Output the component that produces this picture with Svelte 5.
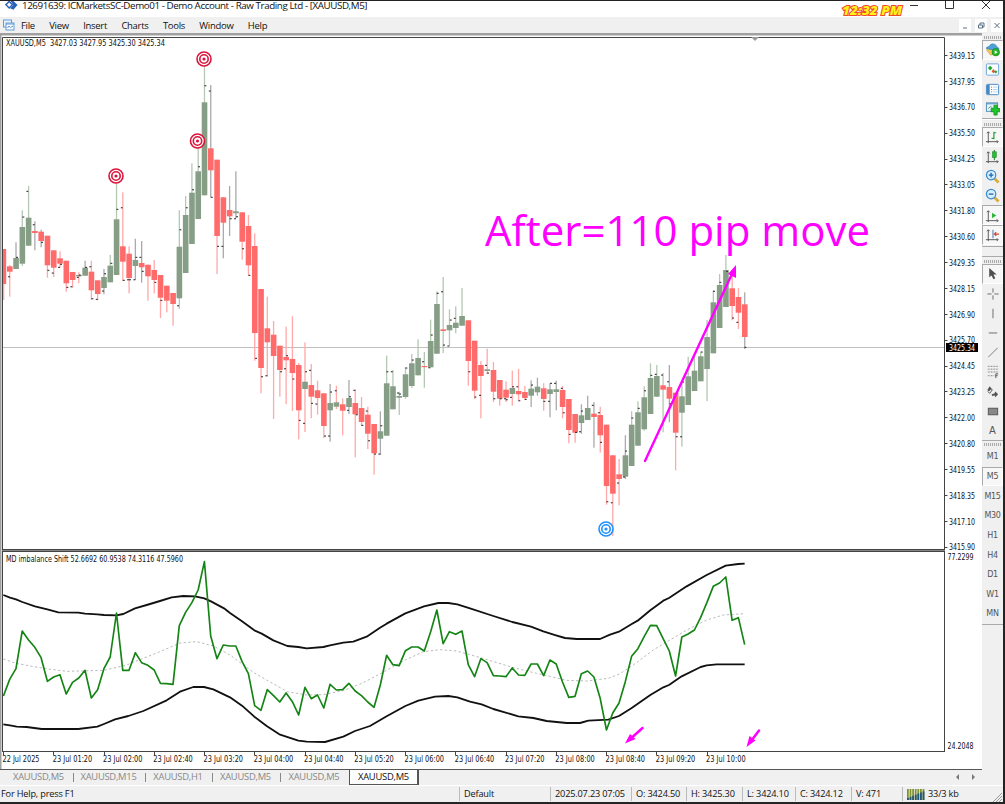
<script lang="ts">
  type Candle = [number, number, number, number, string, string];

  const STEP = 6.282;
  const FIRST_X = 3.4;

  // high, body top, body bottom, low, body kind, wick kind (u = up, d = down, n = neutral)
  const candles: Candle[] = [
    [249, 249, 284, 300, "d", "d"], [265, 266.3, 271.7, 296.7, "d", "d"],
    [242.3, 258, 269, 269, "u", "n"], [210.3, 227, 263.7, 266, "u", "u"],
    [186, 217.7, 245.7, 245.7, "u", "u"], [221.3, 231, 233, 250.3, "d", "n"],
    [229.7, 231.7, 241, 247.3, "d", "n"], [235.7, 235.7, 265.3, 277.7, "d", "d"],
    [250.3, 250.3, 267.7, 277, "d", "d"], [251.3, 258.3, 263.7, 267.7, "d", "d"],
    [260.7, 260.7, 283.3, 291.7, "d", "d"], [272, 272, 280, 287.7, "d", "d"],
    [272.3, 275, 276.3, 283.3, "u", "d"], [260.7, 267.7, 275.7, 275.7, "u", "n"],
    [260.7, 271.7, 290.3, 299.7, "d", "d"], [280.3, 280.3, 294, 300.3, "d", "d"],
    [269, 277, 288, 294.3, "u", "n"], [255, 265.7, 282.3, 282.3, "u", "u"],
    [183, 219.3, 275, 275, "u", "u"], [192.3, 246.3, 261.7, 281, "d", "d"],
    [246.3, 253.7, 278, 293.3, "d", "d"], [238.7, 260, 266, 280, "u", "n"],
    [241, 263, 267.3, 282.7, "d", "n"], [264.7, 264.7, 276.3, 300.7, "d", "d"],
    [260, 270, 280, 293.3, "d", "d"], [275, 275, 297.7, 318, "d", "d"],
    [285.7, 285.7, 300.7, 312.3, "d", "d"], [293, 293, 304, 325.7, "d", "d"],
    [210.3, 246.7, 298.3, 309, "u", "u"], [196, 215, 273, 273, "u", "u"],
    [163.3, 192.7, 244, 244, "u", "u"], [148, 171.3, 219, 219, "u", "u"],
    [66, 102.3, 195.3, 195.3, "u", "u"], [85, 148.3, 170.3, 197.3, "d", "n"],
    [159.7, 159.7, 236, 274, "d", "d"], [197.3, 197.3, 222.7, 258.3, "d", "n"],
    [186, 210, 216.3, 236, "d", "n"], [171.3, 211.3, 213.3, 218, "u", "n"],
    [212.3, 212.3, 241.7, 259.7, "d", "d"], [215, 226, 265.3, 275.3, "d", "d"],
    [233.3, 246, 333, 360.7, "d", "d"], [289, 289, 368, 393.3, "d", "d"],
    [296.7, 328.3, 342.3, 376.7, "d", "d"], [321, 334.7, 356, 419, "d", "d"],
    [345.7, 345.7, 370, 396.7, "d", "d"], [326.7, 357, 360.3, 404.3, "d", "d"],
    [316.3, 359, 373, 411, "d", "d"], [363, 365, 410.3, 439.3, "d", "d"],
    [342.3, 381.7, 389, 432, "u", "d"], [364, 385, 396.7, 418.3, "d", "d"],
    [380.7, 390.3, 398, 414.7, "d", "d"], [393.3, 393.3, 426, 438, "d", "d"],
    [384, 403, 410.3, 441.7, "u", "n"], [385.7, 402.3, 406.7, 409, "u", "d"],
    [398.3, 404.3, 410.7, 435.3, "d", "d"], [380, 398, 407, 414, "u", "n"],
    [389.3, 403, 414.3, 457.3, "d", "d"], [397, 408, 422, 426, "d", "d"],
    [406.7, 414.7, 433.7, 449, "d", "d"], [424, 424, 453.3, 474.7, "d", "d"],
    [411.3, 431.3, 438.7, 455, "u", "n"], [355.7, 383.3, 435.7, 435.7, "u", "u"],
    [370, 386.3, 409.3, 409.3, "u", "u"], [391.7, 396, 397.7, 415, "u", "u"],
    [367.3, 374.3, 397, 398.7, "u", "u"], [354, 363.3, 386, 388, "u", "u"],
    [339.3, 358, 375.3, 375.3, "u", "u"], [352, 366, 367.2, 387.7, "d", "u"],
    [319.7, 341, 367.3, 367.3, "u", "u"], [291.3, 304, 353.7, 353.7, "u", "u"],
    [277, 329.3, 331, 353, "d", "u"], [309.3, 325, 330.3, 346, "u", "u"],
    [306.3, 322.7, 328, 333.3, "u", "u"], [288, 316, 325.7, 325.7, "u", "u"],
    [320.3, 320.3, 361, 385.7, "d", "d"], [340.7, 340.7, 390.7, 399, "d", "d"],
    [361, 365, 376, 418.3, "d", "d"], [348.7, 369.3, 371, 374, "u", "d"],
    [362, 370, 391.7, 402, "d", "d"], [380, 380, 398.7, 405.7, "d", "d"],
    [381.3, 389.7, 397.7, 402, "d", "d"], [370.7, 388, 394, 405.7, "u", "d"],
    [369, 391, 394.3, 400.7, "d", "d"], [385.7, 392, 398, 400, "d", "d"],
    [380.3, 388.7, 395.7, 407, "u", "n"], [377.7, 386.7, 392.3, 395.7, "u", "n"],
    [383.3, 388.3, 399, 410.7, "d", "d"], [383.3, 389.3, 394, 417.3, "u", "n"],
    [380.7, 389.3, 392, 410.3, "u", "n"], [386, 390, 407, 418.3, "d", "d"],
    [399, 399, 430, 443.3, "d", "d"], [414, 414, 432.7, 442.7, "d", "d"],
    [404.3, 415.3, 423, 433.7, "u", "n"], [395.7, 408, 420, 420, "u", "n"],
    [402, 413.7, 417, 447.7, "d", "n"], [406.7, 415, 435.3, 452.7, "d", "d"],
    [424.7, 424.7, 486, 504.7, "d", "d"], [455.3, 455.3, 493.7, 536, "d", "d"],
    [459, 474.3, 479, 505.3, "d", "d"], [435.3, 455.3, 476.7, 479, "u", "n"],
    [411.3, 424.7, 466, 466, "u", "u"], [401.3, 412.3, 445.7, 445.7, "u", "u"],
    [386.3, 397.3, 429.3, 430.7, "u", "u"], [363.3, 378, 414, 414, "u", "u"],
    [365, 376, 396.7, 396.7, "u", "u"], [373, 385.3, 389.7, 432.3, "d", "u"],
    [365, 387, 398.7, 422.3, "d", "n"], [392.7, 392.7, 432.7, 470.3, "d", "d"],
    [381.7, 396.3, 412.7, 446.7, "u", "u"], [356.7, 376.3, 405, 405, "u", "u"],
    [357, 370.7, 391, 391, "u", "u"], [351.7, 356.3, 381.3, 381.3, "u", "u"],
    [320, 337, 369, 401, "u", "u"], [290.3, 302.3, 353.3, 353.3, "u", "u"],
    [274, 285, 328, 328, "u", "u"], [255, 270, 307, 307, "u", "u"],
    [270, 288.3, 306, 320.3, "d", "d"], [288, 297, 312.7, 329, "d", "d"],
    [292.3, 304.3, 337, 349, "d", "n"],
  ];

  // open / close marks
  const marks: [number, number][] = [
    [9, 276.7], [17, 257.3], [23.3, 217], [27.3, 191.3], [33.7, 224.7], [42, 242.3],
    [48.3, 270.3], [52.7, 273], [59, 267.3], [61, 264.3], [67.3, 287.3], [71.3, 286.7],
    [77.7, 277.3], [79.7, 275], [86, 267.3], [90.3, 266.7], [92.3, 298.7], [96.7, 299.3],
    [103, 291], [105, 273.7], [111.3, 263.3], [117.3, 209.3], [121.7, 207.7], [123.7, 280.3],
    [128, 279.7], [130, 279.7], [134.3, 279.7], [136.3, 257.3], [140.3, 257.3], [142.7, 271.3],
    [155.3, 282.3], [161.3, 300.3], [178, 305.7], [180.3, 229.7], [186.7, 207.7], [193, 189.7],
    [199, 166.7], [205.3, 85.7], [209.7, 91], [211.7, 197.3], [218, 246.3], [222.3, 246.3],
    [230.7, 218.7], [235, 218.7], [237, 216.7], [243, 248.7], [249.3, 275.3], [256, 358.3],
    [262, 376.7], [266.3, 375.7], [281, 371.7], [285, 368.7], [287, 355.7], [293.3, 379],
    [299.7, 420.3], [304, 423.3], [306, 371.7], [310, 370.3], [312, 403.3], [316.3, 404],
    [325, 436], [329, 436], [331, 392], [335.7, 390.7], [348, 410.3], [350, 396.7],
    [354.3, 390.3], [356.7, 414.7], [362.3, 425.3], [366.7, 411], [369, 440.7], [375, 454],
    [379.3, 454], [381.3, 425.7], [387.3, 371.7], [391.7, 371.7], [398, 393], [400, 394],
    [406.3, 368], [412.7, 360], [423, 361.7], [429.3, 367.7], [431.7, 335], [437.7, 293.3],
    [442, 291.7], [444, 345], [448.3, 346], [450.7, 320], [454.7, 318.3], [469.3, 371.7],
    [475.3, 397], [480, 395.3], [486, 365.3], [488, 373], [494.3, 398.7], [500.7, 398.7],
    [505, 398.7], [506.7, 399.7], [511, 397.3], [513, 386.7], [517.3, 386.7], [519.3, 400.7],
    [525.7, 399.3], [532, 385], [544.3, 401.3], [549, 401.3], [551, 383.3], [555, 383.3],
    [561.7, 388.3], [563.7, 412.7], [569.7, 434.3], [576, 432.3], [580, 431.7], [582, 411],
    [592.7, 405.3], [599, 412.7], [601, 442.3], [607.3, 501.7], [611.7, 502.7], [618, 483],
    [624, 477], [626, 451], [632.3, 418], [638.7, 408.3], [645, 390.7], [651.3, 375.3],
    [655.7, 374.3], [662, 375], [668, 381.7], [670.3, 403.7], [676.7, 436.7], [681, 436.7],
    [683, 382], [701.7, 352], [714, 291.3], [720.3, 282.3], [727, 271.3], [733, 318],
    [737.3, 322.3], [745.3, 347.3],
  ];

  // one value per candle, in thirds of a pixel below the top of the pane
  const imbalance = [
    453, 403, 371, 258, 285, 307, 338, 409, 396, 389, 447, 412, 399, 376, 459, 434, 371, 336, 204, 376,
    376, 323, 353, 361, 375, 415, 416, 418, 242, 202, 173, 135, 50, 273, 341, 300, 303, 303, 350, 386,
    482, 496, 434, 452, 471, 444, 470, 510, 427, 461, 450, 489, 418, 435, 434, 415, 438, 452, 471, 487,
    420, 331, 359, 362, 317, 306, 306, 318, 261, 195, 296, 260, 268, 258, 359, 395, 341, 353, 392, 393,
    395, 369, 390, 391, 357, 357, 392, 345, 357, 411, 457, 454, 386, 378, 396, 460, 555, 504, 474, 410,
    334, 311, 275, 241, 242, 280, 318, 393, 276, 267, 255, 217, 172, 124, 114, 96, 226, 218, 299,
  ];
  const imbalancePoints = imbalance.map((v, i) => `${(FIRST_X + i * STEP) * 3},${v}`).join(" ");

  const upperBand =
    "10,150 30,158 48,163 67,171 105,184 142,193 175,202 235,203 255,206 292,208 312,210 349,211 370,207 405,190 440,180 480,168 515,157 550,153 585,154 613,160 633,169 672,190 690,204 726,229 763,256 785,266 820,286 862,303 895,306 920,310 970,306 990,301 1030,293 1060,290 1100,275 1140,248 1160,236 1216,205 1272,184 1315,174 1345,174 1372,178 1410,190 1480,213 1537,231 1593,245 1630,259 1668,271 1695,279 1730,282 1800,282 1830,269 1857,260 1894,238 1913,227 1951,196 1990,167 2007,159 2060,124 2120,90 2177,62 2215,57 2234,56";
  const lowerBand =
    "10,538 30,541 50,545 80,546 125,552 235,552 292,545 312,537 345,523 385,513 430,498 500,466 540,440 580,426 612,426 640,433 690,457 726,482 763,515 800,543 838,568 895,587 920,590 975,591 1030,575 1065,558 1110,543 1160,514 1216,483 1255,467 1305,455 1345,453 1372,457 1410,470 1445,478 1480,492 1555,514 1600,519 1640,528 1700,534 1740,534 1765,527 1825,524 1857,513 1894,490 1951,450 1990,427 2007,420 2045,394 2102,366 2120,361 2150,358 2234,358";
  const middleBand =
    "10,342 48,355 130,370 200,379 312,376 380,360 405,350 480,320 540,294 590,290 640,303 690,330 760,382 800,405 862,440 920,450 970,449 1030,437 1090,413 1160,376 1216,345 1270,320 1320,314 1370,318 1442,338 1537,367 1610,385 1700,406 1760,408 1825,400 1860,386 1900,360 1960,315 2010,285 2060,255 2120,225 2170,210 2234,206";

  const prices = [
    "3439.15", "3437.95", "3436.70", "3435.50", "3434.25", "3433.05", "3431.80", "3430.60", "3429.35", "3428.15",
    "3426.90", "3425.70", "3424.45", "3423.25", "3422.00", "3420.80", "3419.55", "3418.35", "3417.10", "3415.90",
  ];
  const times = [
    "22 Jul 2025", "23 Jul 01:20", "23 Jul 02:00", "23 Jul 02:40", "23 Jul 03:20", "23 Jul 04:00", "23 Jul 04:40",
    "23 Jul 05:20", "23 Jul 06:00", "23 Jul 06:40", "23 Jul 07:20", "23 Jul 08:00", "23 Jul 08:40", "23 Jul 09:20", "23 Jul 10:00",
  ];
  const targets: [number, number, string][] = [
    [204, 59, "#dc143c"], [197.5, 141, "#dc143c"], [116, 176, "#dc143c"], [606, 529, "#1e90ff"],
  ];

  const menu = ["File", "View", "Insert", "Charts", "Tools", "Window", "Help"];
  const tabs = ["XAUUSD,M5", "XAUUSD,M15", "XAUUSD,H1", "XAUUSD,M5", "XAUUSD,M5", "XAUUSD,M5"];
  const tabWidths = [73, 72, 67, 68, 69, 70];
  const periods = ["M1", "M5", "M15", "M30", "H1", "H4", "D1", "W1", "MN"];
  const chartTools = ["bars", "candle", "zoomin", "zoomout", "scroll", "shift"];
  const lineTools = ["cursor", "cross", "vline", "hline", "trend", "fibo", "arrows", "rect", "text"];
</script>

{#snippet icon(name: string)}
  <svg class="icon" viewBox="0 0 16 16">
    {#if name === "neworder"}
      <path d="M2 6.500 7.500 3 13 6l-4 7-3 1-4-5z" fill="#efc75e" stroke="#c49a37" stroke-width=".6" />
      <path d="M1 6.500Q3 5 4.500 4.500 6 1.500 9 2q3 .5 3.500 3 2 1 2.500 2.500Q8 10 1 6.500z" fill="#4da0d8" stroke="#287bb5" stroke-width=".6" />
      <circle cx="11.500" cy="10.800" r="4" fill="#24b528" stroke="#0b8211" stroke-width=".6" />
      <path d="M10.300 8.700v4.200l3.200-2.100z" fill="#fff" />
    {:else if name === "market"}
      <rect x="1.500" y="2" width="13" height="12" rx="1" fill="#fff" stroke="#6aa5dc" />
      <path d="M3 6.500 5.500 4 8 6.500 5.500 9z" fill="#25a934" /><path d="M7 10 9 7.500 11 10 9 12z" fill="#e2542d" />
      <path d="M10 10.500h3M11.500 9v3" stroke="#25a934" stroke-width="1.500" />
    {:else if name === "window"}
      <rect x="1.500" y="2.500" width="13" height="11" rx="1" fill="#fff" stroke="#4586c5" />
      <path d="M3.500 3v10" stroke="#4586c5" stroke-width="3" /><path d="M6.500 5.500h1M6.500 8h1M6.500 10.500h1" stroke="#d04040" />
      <path d="M8.500 5.500h5M8.500 8h5M8.500 10.500h5" stroke="#b9d5ec" />
    {:else if name === "newchart"}
      <rect x="1.500" y="2" width="12" height="9" fill="#e6f2fb" stroke="#4e8bbb" />
      <path d="M2 3h11" stroke="#4e8bbb" /><path d="M3.500 8 6 6l2 1" fill="none" stroke="#589f6c" />
      <path d="M9.500 4.500h3.500v3.500h3v3.500h-3V15H9.500v-3.500h-3V8h3z" fill="#20c52c" stroke="#078413" stroke-width=".7" />
    {:else if name === "bars" || name === "candle" || name === "scroll" || name === "shift"}
      <path d="M3.500 3v12M1 13.500h13M2 4.500 3.500 3 5 4.500M12.500 12l1.500 1.500-1.500 1.500" fill="none" stroke="#555" />
      {#if name === "bars"}
        <path d="M9.500 3v8M9.500 4H12M7 10h2.500" stroke="#24a337" stroke-width="1.300" />
      {:else if name === "candle"}
        <path d="M10 1v11" stroke="#187d20" /><rect x="8" y="3" width="4" height="6" fill="#21c337" stroke="#187d20" stroke-width=".6" />
      {:else if name === "scroll"}
        <path d="M7.500 5v6l4.500-3z" fill="#28b23a" />
      {:else}
        <path d="M8.500 3v9" stroke="#386fac" /><path d="M10 7.500h5M12 5.500l-2 2 2 2" fill="none" stroke="#c64b2f" stroke-width="1.300" />
      {/if}
    {:else if name === "zoomin" || name === "zoomout"}
      <path d="m9.500 9.500 5 5" stroke="#d9ad37" stroke-width="3" /><circle cx="6.500" cy="6.500" r="5" fill="#d8efff" stroke="#398bd0" stroke-width="1.300" />
      <path d="M4 6.500h5" stroke="#286eb4" stroke-width="1.500" />
      {#if name === "zoomin"}<path d="M6.500 4v5" stroke="#286eb4" stroke-width="1.500" />{/if}
    {:else if name === "cursor"}
      <path d="M4.500 2v10l2.500-2 2 4 2-1-2-4h3.500z" fill="#505050" />
    {:else if name === "cross"}
      <path d="M8.500 2.500V7M8.500 10V14.500M2.500 8.500H7M10 8.500h4.500" stroke="#666" />
    {:else if name === "vline"}
      <path d="M8.500 3v10" stroke="#666" />
    {:else if name === "hline"}
      <path d="M4 8.500h9" stroke="#666" />
    {:else if name === "trend"}
      <path d="M3.500 13 13.500 3" stroke="#777" />
    {:else if name === "fibo"}
      <path d="M3 2.500h11M3 5.500h11M3 8.500h11M3 12.500h7" stroke="#777" stroke-dasharray="1 .7" /><path d="M11.500 15v-4.500H14M11.500 12.500h2" fill="none" stroke="#555" />
    {:else if name === "arrows"}
      <path d="M5 2.500 8 6H6L4 8 2.500 6.500zM11 8l3 3-3 3-1-2-2 1-1-2 3-1z" fill="#555" /><path d="m3 8 2 2 3-4" fill="none" stroke="#555" />
    {:else if name === "rect"}
      <rect x="3.500" y="4.500" width="10" height="7" fill="#888" stroke="#555" />
    {/if}
  </svg>
{/snippet}

<div class="window">
  <header class="titlebar">
    <svg class="logo" viewBox="0 0 14 14"><path d="M4.500 1.500 8 5 4.500 8.500 1 5z" fill="#fff" stroke="#2862b5" stroke-width="1.500" /><path d="M6 1h3l4.500 4.500L9 10.500 5.500 9 9 5.500z" fill="#2862b5" /></svg>
    <span class="title">12691639: ICMarketsSC-Demo01 - Demo Account - Raw Trading Ltd - [XAUUSD,M5]</span>
    <svg class="clock" viewBox="0 0 66 17"><text x="2" y="13.500" textLength="60" lengthAdjust="spacingAndGlyphs">12:32 PM</text></svg>
    <svg class="controls" viewBox="0 0 96 17"><path d="M4 4.500h8M39.500 0v7.500h8V0M76 0l8 8M84 0l-8 8" /></svg>
  </header>

  <nav class="menubar">
    <svg class="doc" viewBox="0 0 12 12"><rect x=".5" y="1" width="8" height="7" fill="#eaf4ff" stroke="#629bd5" /><rect x="3" y="4" width="8" height="7" fill="#f7fbff" stroke="#629bd5" /><path d="M3 5h8M4.500 9 6 7l1.500 1.500L10 7" fill="none" stroke="#629bd5" /></svg>
    {#each menu as label}
      <span>{label}</span>
    {/each}
    <div class="mdi">
      <svg viewBox="0 0 12 13"><path d="M4 9h4" /></svg>
      <svg viewBox="0 0 12 13"><path d="M3.500 6h4v3h-4zM5 6V4h4v4H7.500" fill="none" /></svg>
      <svg viewBox="0 0 12 13"><path d="m3.500 4 5 5M8.500 4l-5 5" /></svg>
    </div>
  </nav>

  <main>
    <section class="workspace">
      <svg class="chart" viewBox="0 33 982 736">
        <rect x="0" y="33" width="982" height="2.500" fill="#a0a0a0" />
        <rect x="0" y="33" width="1.500" height="736" fill="#a0a0a0" />
        <path d="M2.500 752V37.500H944.500V751.500" class="frame" />
        <rect x="2" y="549" width="943" height="2.500" fill="#858585" />
        <path d="M2 549.500H945M2 551.500H945M2 751.500H945" class="frame" />
        <path d="M751 37h8l-4 4z" fill="#999" />
        <path d="M3 347.500H944" stroke="#c0c0c0" />

        <g>
          {#each candles as [high, top, bottom, low, body, wick], i}
            <rect class="wick-{wick}" x={Math.max(3, FIRST_X + i * STEP - 0.6)} y={high} width="1.3" height={low - high} />
            <rect class={body} x={Math.max(3, FIRST_X + i * STEP - 2.7)} y={top} width={i === 0 ? 3.2 : 5.6} height={bottom - top} />
          {/each}
          {#each marks as [x, y]}
            <rect x={x - 0.9} y={y - 0.5} width="1.9" height="1.1" fill="#333" />
          {/each}
        </g>

        {#each targets as [x, y, color]}
          <g fill="none" stroke={color} stroke-width="1.600">
            <circle cx={x} cy={y} r="7" fill="#fff" /><circle cx={x} cy={y} r="4.200" />
            <circle cx={x} cy={y} r="1.600" fill={color} stroke="none" />
          </g>
        {/each}

        <text class="small" x="6" y="46" textLength="159" lengthAdjust="spacingAndGlyphs" xml:space="preserve">XAUUSD,M5  3427.03 3427.95 3425.30 3425.34</text>
        <text class="note" x="485" y="246" textLength="385" lengthAdjust="spacingAndGlyphs">After=110 pip move</text>
        <path d="M645 461 731.500 275" stroke="#f0f" stroke-width="2.400" stroke-linecap="round" />
        <path d="m736 265-8 9 8 4z" fill="#f0f" />

        {#each prices as price, i}
          <path d="M945 {Math.round(55 + i * 25.88) + 0.5}h2.500" class="frame" />
          <text class="small" x="949" y={58.7 + i * 25.88} textLength="26" lengthAdjust="spacingAndGlyphs">{price}</text>
        {/each}
        <rect x="946" y="343" width="32" height="9" fill="#000" />
        <text class="small current" x="949" y="350.500" textLength="26" lengthAdjust="spacingAndGlyphs">3425.34</text>

        <g transform="translate(0 545) scale(.33333)" fill="none" stroke-linejoin="round">
          <polyline points={middleBand} stroke="#b9b9b9" stroke-width="3" stroke-dasharray="7 7" />
          <polyline points={upperBand} stroke="#111" stroke-width="5.500" />
          <polyline points={lowerBand} stroke="#111" stroke-width="5.500" />
          <polyline points={imbalancePoints} stroke="#148414" stroke-width="5" />
        </g>
        <g stroke="#f0f" fill="#f0f">
          <path d="m642.500 728-10 9M759 730.500l-6 8" stroke-width="2.500" stroke-linecap="round" />
          <path d="m625 743.500 5-9.500 5.500 5zM746.500 747l3-11 6 4.500z" stroke="none" />
        </g>
        <text class="small" x="6" y="561.500" textLength="177" lengthAdjust="spacingAndGlyphs">MD imbalance Shift 52.6692 60.9538 74.3116 47.5960</text>
        <text class="small" x="947.500" y="560.300" textLength="26" lengthAdjust="spacingAndGlyphs">77.2299</text>
        <text class="small" x="947.500" y="749" textLength="26" lengthAdjust="spacingAndGlyphs">24.2048</text>

        {#each times as time, i}
          <path d="M{Math.round(3 + i * 50.256) + 0.5} 752v3" class="frame" />
          <text class="small" x={2.5 + i * 50.256} y="762" textLength={i ? 39.5 : 37} lengthAdjust="spacingAndGlyphs">{time}</text>
        {/each}
      </svg>

      <div class="tabs">
        {#each tabs as tab, i}
          <span class:active={i === 5} style="width: {tabWidths[i]}px">{tab}</span>
        {/each}
        <svg viewBox="0 0 24 8"><path d="M5 1v6L2 4zM18 1v6l3-3z" fill="#777" /></svg>
      </div>
    </section>

    <aside>
      <div class="group first">
        <i class="grip"></i>
        <span class="tool pressed">{@render icon("neworder")}</span>
        {#each ["market", "window", "newchart"] as name}
          <span class="tool">{@render icon(name)}</span>
        {/each}
      </div>
      <div class="group second">
        <i class="grip"></i>
        {#each chartTools as name}
          <span class="tool" class:pressed={name === "bars" || name === "scroll" || name === "shift"}>{@render icon(name)}</span>
        {/each}
      </div>
      <div class="group third">
        <i class="grip"></i>
        {#each lineTools as name}
          <span class="tool" class:pressed={name === "cursor"}>
            {#if name === "text"}A{:else}{@render icon(name)}{/if}
          </span>
        {/each}
      </div>
      <div class="group fourth">
        <i class="grip"></i>
        {#each periods as period}
          <span class="tool period" class:pressed={period === "M5"}>{period}</span>
        {/each}
      </div>
    </aside>
  </main>

  <footer>
    <span>For Help, press F1</span>
    <span>Default</span>
    <span>2025.07.23 07:05</span>
    <span>O: 3424.50</span>
    <span>H: 3425.30</span>
    <span>L: 3424.10</span>
    <span>C: 3424.12</span>
    <span>V: 471</span>
    <span class="traffic">
      <svg viewBox="0 0 18 11">
        {#each [0, 1, 2, 3, 4, 5, 6] as n}
          <rect x={n * 2.6} y="0" width="1.800" height="11" fill="#809331" />
          <rect x={n * 2.6} y={9 - n * 1.1} width="1.800" height={2 + n * 1.1} fill="#245675" />
        {/each}
      </svg>
      33/3 kb
    </span>
    <svg class="resize" viewBox="0 0 10 10"><path d="M1 10 10 1M4 10l6-6M7 10l3-3" stroke="#999" /></svg>
  </footer>
</div>

<style>
  :global(body) {
    margin: 0;
    overflow: hidden;
  }

  .window {
    box-sizing: border-box;
    width: 1005px;
    height: 804px;
    display: flex;
    flex-direction: column;
    border: solid #242424;
    border-width: 1px 2px 2px 0;
    background: #f0f0f0;
    color: #111;
    font: 10px "Open Sans", "Noto Sans", sans-serif;
    overflow: hidden;
    white-space: nowrap;
  }

  svg {
    display: block;
    flex: none;
  }

  .titlebar {
    height: 16px;
    flex: none;
    display: flex;
    background: #fff;
  }

  .logo {
    width: 13px;
    height: 13px;
    margin: -1px 4px 0 5px;
  }

  .title {
    font-size: 9.8px;
    line-height: 10px;
    width: 818px;
    letter-spacing: -0.42px;
  }

  .clock {
    width: 66px;
    height: 17px;
  }

  .clock text {
    font: italic 900 12.5px "Open Sans", sans-serif;
    fill: #fff21b;
    stroke: #f5462f;
    stroke-width: 2px;
    paint-order: stroke;
  }

  .controls {
    width: 96px;
    height: 17px;
  }

  .controls path {
    fill: none;
    stroke: #333;
  }

  .menubar {
    height: 16px;
    flex: none;
    display: flex;
    align-items: center;
    gap: 14.4px;
    font-size: 9.500px;
    letter-spacing: -0.3px;
  }

  .doc {
    width: 12px;
    height: 12px;
    margin: 0 -8.400px 0 3px;
  }

  .mdi {
    display: flex;
    gap: 4px;
    margin-left: auto;
  }

  .mdi svg {
    width: 12px;
    height: 13px;
    background: #fff;
    stroke: #596f84;
  }

  main {
    height: 752px;
    flex: none;
    display: flex;
  }

  .workspace {
    width: 982px;
    flex: none;
    background: #fff;
  }

  .chart {
    width: 982px;
    height: 736px;
  }

  .frame {
    fill: none;
    stroke: #444;
  }

  .u {
    fill: #869d86;
  }

  .d {
    fill: #ff6b6b;
  }

  .wick-u {
    fill: #b4c8b4;
  }

  .wick-d {
    fill: #ffa9a9;
  }

  .wick-n {
    fill: #aaa;
  }

  .small {
    font: 8.2px "DejaVu Sans Condensed", "DejaVu Sans", sans-serif;
    fill: #111;
  }

  .small.current {
    fill: #fff;
  }

  .note {
    font: 42px "Open Sans", sans-serif;
    fill: #f0f;
  }

  .tabs {
    box-sizing: border-box;
    height: 16px;
    display: flex;
    border-top: 1px solid #555;
    background: #f0f0f0;
    color: #888;
    font-size: 9.400px;
    letter-spacing: -0.25px;
    line-height: 14px;
    padding-left: 2px;
  }

  .tabs span {
    box-sizing: border-box;
    text-align: center;
    position: relative;
  }

  .tabs span:not(:first-child):not(.active) {
    padding-right: 5px;
  }

  .tabs span:not(.active):not(:nth-child(5))::after {
    content: "";
    position: absolute;
    right: 1px;
    top: 3px;
    height: 9px;
    border-right: 1px solid #888;
  }

  .tabs .active {
    background: #fff;
    color: #111;
    border: solid #555;
    border-width: 0 2px 1px 1px;
    margin-left: -2px;
  }

  .tabs svg {
    width: 24px;
    height: 8px;
    margin: 3px 4px 0 auto;
  }

  aside {
    width: 21px;
    flex: none;
    background: #f0f0f0;
  }

  .group {
    box-sizing: border-box;
    border-bottom: 1px solid #aaa;
    padding-top: 3px;
  }

  .first {
    height: 86px;
  }

  .second {
    height: 128px;
    border-top: 1px solid #fff;
  }

  .third {
    height: 185px;
    border-top: 1px solid #aaa;
    margin-top: 9px;
  }

  .fourth {
    height: 184px;
    padding-top: 2px;
  }

  .grip {
    display: block;
    height: 3px;
    margin: 0 1px 1px 2px;
    background: repeating-linear-gradient(90deg, #aaa 0 1px, #eee 1px 2px);
  }

  .first .tool,
  .second .tool,
  .third .tool {
    margin-top: -0.02px;
  }

  .tool {
    box-sizing: border-box;
    height: 19.650px;
    display: flex;
    align-items: center;
    justify-content: center;
    border: 1px solid transparent;
    color: #555;
    font: 10px "DejaVu Sans", sans-serif;
  }

  .pressed {
    border-color: #aaa #fff #fff #aaa;
    background: #f7f7f7;
  }

  .icon {
    width: 15px;
    height: 15px;
  }

  .period {
    font-size: 8px;
    letter-spacing: -0.3px;
  }

  footer {
    height: 17px;
    display: grid;
    grid-template-columns: 459px 91px 81px 55px 56px 53px 56px 51px 90px 11px;
    align-items: center;
    border-top: 1px solid #fff;
    font-size: 9.200px;
    letter-spacing: -0.18px;
  }

  footer span {
    line-height: 14px;
    padding-left: 4px;
    border-left: 1px solid #bbb;
  }

  footer span:first-child {
    padding-left: 1px;
    border: 0;
  }

  .traffic {
    display: flex;
    align-items: center;
    gap: 3px;
  }

  .traffic svg {
    width: 18px;
    height: 11px;
  }

  .resize {
    width: 10px;
    height: 10px;
    align-self: end;
  }
</style>
